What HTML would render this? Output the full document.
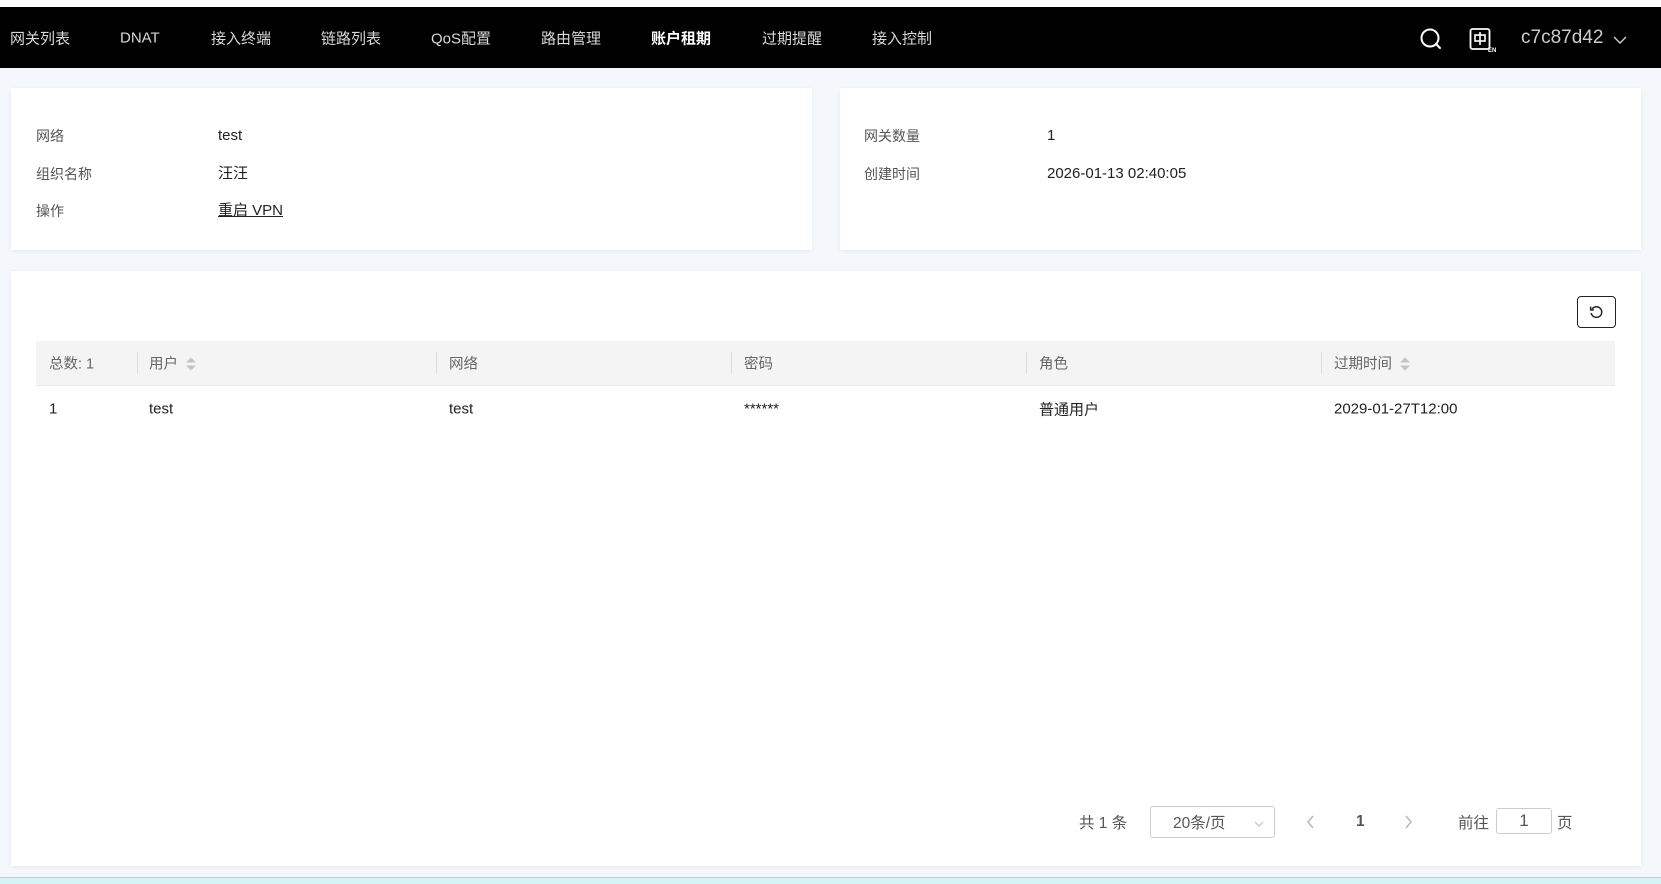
<!DOCTYPE html>
<html><head><meta charset="utf-8"><style>
*{margin:0;padding:0;box-sizing:border-box}
body{width:1661px;height:884px;background:#f4f7fb;font-family:"Liberation Sans","Noto Sans CJK SC",sans-serif;position:relative;overflow:hidden;color:#222}
.a{position:absolute;white-space:nowrap}
.top{position:absolute;left:0;top:0;width:1661px;height:7px;background:#fff}
.nav{position:absolute;left:0;top:7px;width:1661px;height:61px;background:#000}
.nav .t{position:absolute;white-space:nowrap;top:31px;transform:translateY(-50%);color:#d8d8d8;font-size:15px}
.ic{position:absolute}
.card{position:absolute;background:#fff;box-shadow:0 1px 4px rgba(0,0,0,.06)}
.lbl,.val{line-height:20px;transform:translateY(-50%)}
.lbl{color:#555;font-size:14px}
.val{color:#222;font-size:15px}
.th{position:absolute;top:341px;height:45px;left:36px;width:1579px;background:#f4f4f4;border-bottom:1px solid #e8e8e8}
.th .a{top:50%;transform:translateY(-50%);color:#666;font-size:14.5px}
.sep{position:absolute;top:11px;height:22px;width:1px;background:#ddd}
.sort{display:inline-block;vertical-align:middle;margin-left:8px;width:10px;height:14px;position:relative}
.sort:before{content:"";position:absolute;left:0;top:0;border:5px solid transparent;border-bottom:5px solid #c0c4cc;border-top:0}
.sort:after{content:"";position:absolute;left:0;top:8px;border:5px solid transparent;border-top:5px solid #c0c4cc;border-bottom:0}
.td{top:409px;transform:translateY(-50%);font-size:15px;color:#222}
.pg{top:822px;transform:translateY(-50%);font-size:15.5px;color:#555}
</style></head><body>
<div class="top"></div>
<div class="nav">
<span class="t" style="left:10px">网关列表</span>
<span class="t" style="left:120px">DNAT</span>
<span class="t" style="left:211px">接入终端</span>
<span class="t" style="left:321px">链路列表</span>
<span class="t" style="left:431px">QoS配置</span>
<span class="t" style="left:541px">路由管理</span>
<span class="t" style="left:651px;color:#fff;font-weight:bold">账户租期</span>
<span class="t" style="left:762px">过期提醒</span>
<span class="t" style="left:872px">接入控制</span>
<svg class="ic" style="left:1419px;top:20px" width="24" height="24" viewBox="0 0 24 24"><circle cx="11" cy="11" r="8.5" fill="none" stroke="#fff" stroke-width="2"/><path d="M17 17l4 4" stroke="#fff" stroke-width="2" stroke-linecap="round"/></svg>
<svg class="ic" style="left:1469px;top:20px" width="28" height="26" viewBox="0 0 28 26"><rect x="1.5" y="2" width="19" height="20" rx="2" fill="none" stroke="#fff" stroke-width="1.8"/><rect x="6" y="8" width="10" height="6" fill="none" stroke="#fff" stroke-width="1.6"/><path d="M11 5v13" stroke="#fff" stroke-width="1.6"/><text x="19" y="25" font-size="6" fill="#fff" font-family="Liberation Sans" font-weight="bold">EN</text></svg>
<span class="t" style="left:1521px;font-size:19px;color:#ccc;top:31px">c7c87d42</span>
<svg class="ic" style="left:1613px;top:28px" width="14" height="10" viewBox="0 0 14 10"><path d="M1 2l6 6 6-6" fill="none" stroke="#ccc" stroke-width="1.4"/></svg>
</div>

<div class="card" style="left:11px;top:88px;width:801px;height:162px">
<span class="a lbl" style="left:25px;top:48px">网络</span><span class="a val" style="left:207px;top:48px">test</span>
<span class="a lbl" style="left:25px;top:86px">组织名称</span><span class="a val" style="left:207px;top:86px">汪汪</span>
<span class="a lbl" style="left:25px;top:123px">操作</span><span class="a val" style="left:207px;top:123px;text-decoration:underline">重启 VPN</span>
</div>
<div class="card" style="left:840px;top:88px;width:801px;height:162px">
<span class="a lbl" style="left:24px;top:48px">网关数量</span><span class="a val" style="left:207px;top:48px">1</span>
<span class="a lbl" style="left:24px;top:86px">创建时间</span><span class="a val" style="left:207px;top:86px">2026-01-13 02:40:05</span>
</div>
<div class="card" style="left:11px;top:271px;width:1630px;height:595px"></div>
<div class="a" style="left:1577px;top:296px;width:39px;height:32px;border:1px solid #222;border-radius:4px;background:#fff"><svg style="position:absolute;left:10px;top:7px" width="17" height="17" viewBox="0 0 16 16"><path d="M4 4.5A5 5 0 1 1 3 8.5" fill="none" stroke="#222" stroke-width="1.4"/><path d="M2.5 2.5v3h3" fill="none" stroke="#222" stroke-width="1.4"/></svg></div>
<div class="th">
<span class="a" style="left:13px">总数: 1</span>
<div class="sep" style="left:101px"></div><span class="a" style="left:113px">用户<i class="sort"></i></span>
<div class="sep" style="left:400px"></div><span class="a" style="left:413px">网络</span>
<div class="sep" style="left:695px"></div><span class="a" style="left:708px">密码</span>
<div class="sep" style="left:990px"></div><span class="a" style="left:1003px">角色</span>
<div class="sep" style="left:1285px"></div><span class="a" style="left:1298px">过期时间<i class="sort"></i></span>
</div>
<span class="a td" style="left:49px">1</span>
<span class="a td" style="left:149px">test</span>
<span class="a td" style="left:449px">test</span>
<span class="a td" style="left:744px">******</span>
<span class="a td" style="left:1039px">普通用户</span>
<span class="a td" style="left:1334px">2029-01-27T12:00</span>

<span class="a pg" style="left:1079px">共 1 条</span>
<div class="a" style="left:1150px;top:806px;width:125px;height:32px;border:1px solid #ccc;border-radius:3px"><span class="a" style="left:22px;top:15px;transform:translateY(-50%);font-size:15.5px;color:#555">20条/页</span><svg class="a" style="left:103px;top:14px" width="10" height="7" viewBox="0 0 10 7"><path d="M1 1l4 4 4-4" fill="none" stroke="#bbb" stroke-width="1"/></svg></div>
<svg class="a" style="left:1307px;top:815px" width="8" height="14" viewBox="0 0 8 14"><path d="M6 1L1 7l5 6" fill="none" stroke="#bbb" stroke-width="1.6"/></svg>
<span class="a pg" style="left:1356px;font-weight:bold;color:#555">1</span>
<svg class="a" style="left:1404px;top:815px" width="8" height="14" viewBox="0 0 8 14"><path d="M2 1l5 6-5 6" fill="none" stroke="#bbb" stroke-width="1.6"/></svg>
<span class="a pg" style="left:1458px">前往</span>
<div class="a" style="left:1496px;top:808px;width:56px;height:26px;border:1px solid #ccc;border-radius:3px;text-align:center;font-size:17px;color:#555;line-height:24px">1</div>
<span class="a pg" style="left:1557px">页</span>
<div class="a" style="left:0;top:877px;width:1661px;height:7px;background:#d4f4f6;border-top:1px solid #bcd"></div>
</body></html>
